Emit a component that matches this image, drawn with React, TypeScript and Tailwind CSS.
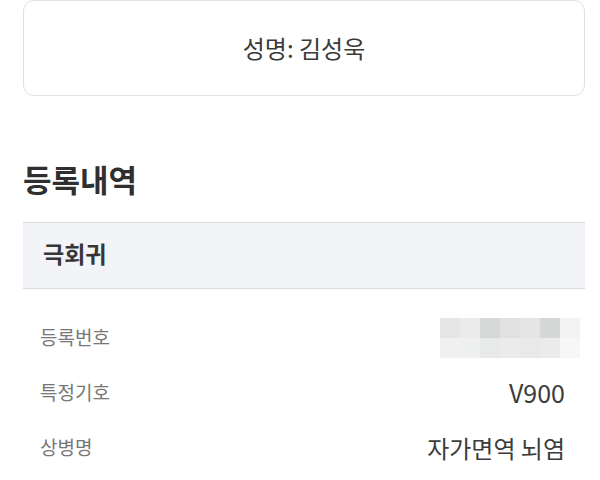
const blurTop = ['#e6e6e6', '#ebebeb', '#d6d8d8', '#e3e0e0', '#e5e5e5', '#d5d7d7', '#f3f3f3']
const blurBottom = ['#f0f0f0', '#eef0f0', '#e8eaea', '#ecebeb', '#e9e9e9', '#ebebeb', '#f7f7f7']

function Blurred() {
  return (
    <div className="mr-[-15px] flex flex-col">
      <div className="flex">
        {blurTop.map((c, i) => <div key={i} className="w-[20px] h-[20px]" style={{ backgroundColor: c }} />)}
      </div>
      <div className="flex">
        {blurBottom.map((c, i) => <div key={i} className="w-[20px] h-[20px]" style={{ backgroundColor: c }} />)}
      </div>
    </div>
  )
}

function Row({ label, children }: { label: string, children: React.ReactNode }) {
  return (
    <div className="h-[55px] pl-[17px] pr-[20px] flex items-center justify-between">
      <span className="text-[19px] text-[#777]">{label}</span>
      {children}
    </div>
  )
}

export default function App() {
  return (
    <div className="w-[600px] h-[480px] bg-white pl-[23px] pr-[15px] overflow-hidden font-['Noto_Sans_CJK_KR',sans-serif]">
      <div className="h-[96px] border border-[#dde1e4] rounded-[11px] flex items-center justify-center">
        <span className="text-[24px] text-[#3a3a3a]">성명: 김성욱</span>
      </div>

      <h2 className="mt-[64px] text-[31px] leading-[38px] font-bold text-[#2f2f2f]">등록내역</h2>

      <div className="mt-[24px] h-[67px] bg-[#f2f4f7] border-y border-[#d9dde1] pl-[20px] pb-[4px] flex items-center">
        <span className="text-[23px] font-bold text-[#363636]">극회귀</span>
      </div>

      <div className="mt-[21px]">
        <Row label="등록번호">
          <Blurred />
        </Row>
        <Row label="특정기호">
          <span className="text-[25px] text-[#3c3c3c]">V900</span>
        </Row>
        <Row label="상병명">
          <span className="text-[24px] text-[#3c3c3c]">자가면역 뇌염</span>
        </Row>
      </div>
    </div>
  )
}
